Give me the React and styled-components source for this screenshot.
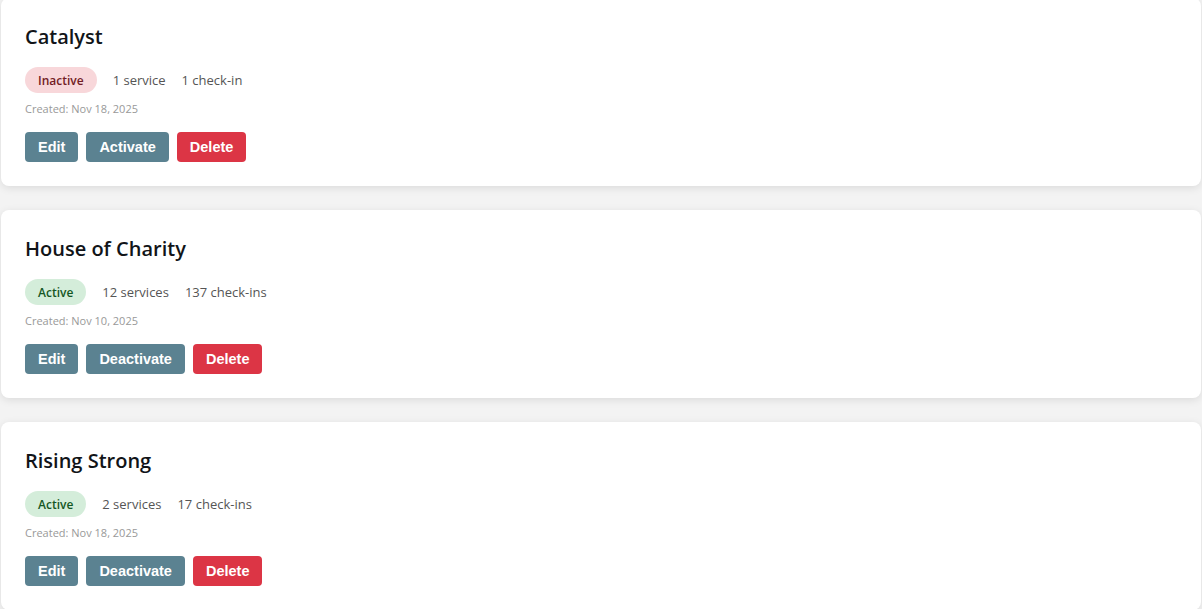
import React from "react";
import styled, { createGlobalStyle } from "styled-components";

const GlobalStyle = createGlobalStyle`
  html, body {
    margin: 0;
    padding: 0;
    background: #f3f3f3;
    font-family: "Open Sans", "Noto Sans", sans-serif;
  }
`;

const organizations = [
  { id: 1, name: "Catalyst", active: false, services: "1 service", checkins: "1 check-in", created: "Nov 18, 2025" },
  { id: 2, name: "House of Charity", active: true, services: "12 services", checkins: "137 check-ins", created: "Nov 10, 2025" },
  { id: 3, name: "Rising Strong", active: true, services: "2 services", checkins: "17 check-ins", created: "Nov 18, 2025" },
];

const OrgCard = ({ org: { name, active, services, checkins, created } }) => (
  <Card>
    <Title>{name}</Title>
    <MetaRow>
      <Badge $active={active}>{active ? "Active" : "Inactive"}</Badge>
      <Meta>{services}</Meta>
      <Meta>{checkins}</Meta>
    </MetaRow>
    <Created>Created: {created}</Created>
    <Actions>
      <Button>Edit</Button>
      <Button>{active ? "Deactivate" : "Activate"}</Button>
      <Button $danger>Delete</Button>
    </Actions>
  </Card>
);

export default function App() {
  return (
    <>
      <GlobalStyle />
      <List>
        {organizations.map((org) => (
          <OrgCard key={org.id} org={org} />
        ))}
      </List>
    </>
  );
}

const List = styled.div`
  display: flex;
  flex-direction: column;
  gap: 24px;
  max-width: 1200px;
  margin: -2px auto 0;
`;

const Card = styled.div`
  background: #ffffff;
  border-radius: 8px;
  box-shadow: 0 2px 8px rgba(0, 0, 0, 0.1);
  padding: 24px;
`;

const Title = styled.h3`
  margin: 0 0 16px;
  font-size: 20px;
  line-height: 29px;
  font-weight: 600;
  color: #111418;
`;

const MetaRow = styled.div`
  display: flex;
  align-items: center;
  gap: 16px;
  height: 26px;
`;

const Badge = styled.span`
  display: inline-flex;
  align-items: center;
  height: 26px;
  padding: 0 13px;
  border-radius: 13px;
  font-size: 12px;
  font-weight: 600;
  background: ${({ $active }) => ($active ? "#d4edda" : "#f8d7da")};
  color: ${({ $active }) => ($active ? "#155724" : "#721c24")};
`;

const Meta = styled.span`
  font-size: 13px;
  color: #555555;
`;

const Created = styled.div`
  margin-top: 8px;
  font-size: 11px;
  line-height: 16px;
  color: #999999;
`;

const Actions = styled.div`
  display: flex;
  gap: 8px;
  margin-top: 15px;
`;

const Button = styled.button`
  height: 30px;
  padding: 0 13px;
  border: none;
  border-radius: 4px;
  font-family: "Liberation Sans", Arial, sans-serif;
  font-size: 14.5px;
  font-weight: 700;
  color: #ffffff;
  background: ${({ $danger }) => ($danger ? "#dc3545" : "#5b8291")};
  cursor: pointer;
`;
